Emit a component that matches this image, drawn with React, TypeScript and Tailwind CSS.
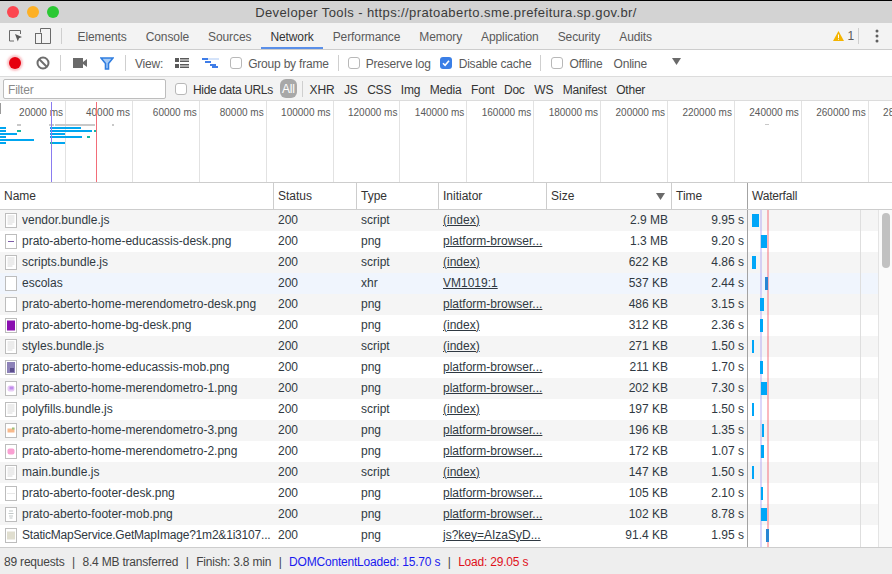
import type { ReactNode } from "react";

type Thumb = "doc" | "blank" | "dash" | "purple" | "edu" | "mero1" | "mero3" | "mero2" | "thin" | "footer" | "map";

type Row = {
  name: string;
  type: string;
  initiator: string;
  size: string;
  time: string;
  thumb: Thumb;
  bar: [number, number];
  wait?: number;
  dark?: boolean;
};

const rows: Row[] = [
  { name: "vendor.bundle.js", type: "script", initiator: "(index)", size: "2.9 MB", time: "9.95 s", thumb: "doc", bar: [752, 7] },
  { name: "prato-aberto-home-educassis-desk.png", type: "png", initiator: "platform-browser...", size: "1.3 MB", time: "9.20 s", thumb: "dash", bar: [761, 6], wait: 1 },
  { name: "scripts.bundle.js", type: "script", initiator: "(index)", size: "622 KB", time: "4.86 s", thumb: "doc", bar: [752, 4] },
  { name: "escolas", type: "xhr", initiator: "VM1019:1", size: "537 KB", time: "2.44 s", thumb: "blank", bar: [765, 3], dark: true },
  { name: "prato-aberto-home-merendometro-desk.png", type: "png", initiator: "platform-browser...", size: "486 KB", time: "3.15 s", thumb: "blank", bar: [760, 4] },
  { name: "prato-aberto-home-bg-desk.png", type: "png", initiator: "(index)", size: "312 KB", time: "2.36 s", thumb: "purple", bar: [760, 3] },
  { name: "styles.bundle.js", type: "script", initiator: "(index)", size: "271 KB", time: "1.50 s", thumb: "doc", bar: [752, 2] },
  { name: "prato-aberto-home-educassis-mob.png", type: "png", initiator: "platform-browser...", size: "211 KB", time: "1.70 s", thumb: "edu", bar: [760, 3] },
  { name: "prato-aberto-home-merendometro-1.png", type: "png", initiator: "platform-browser...", size: "202 KB", time: "7.30 s", thumb: "mero1", bar: [761, 6], wait: 1 },
  { name: "polyfills.bundle.js", type: "script", initiator: "(index)", size: "197 KB", time: "1.50 s", thumb: "doc", bar: [752, 2] },
  { name: "prato-aberto-home-merendometro-3.png", type: "png", initiator: "platform-browser...", size: "196 KB", time: "1.35 s", thumb: "mero3", bar: [762, 2], wait: 2 },
  { name: "prato-aberto-home-merendometro-2.png", type: "png", initiator: "platform-browser...", size: "172 KB", time: "1.07 s", thumb: "mero2", bar: [761, 3], wait: 1 },
  { name: "main.bundle.js", type: "script", initiator: "(index)", size: "147 KB", time: "1.50 s", thumb: "doc", bar: [752, 2] },
  { name: "prato-aberto-footer-desk.png", type: "png", initiator: "platform-browser...", size: "105 KB", time: "2.10 s", thumb: "thin", bar: [761, 2], wait: 1 },
  { name: "prato-aberto-footer-mob.png", type: "png", initiator: "platform-browser...", size: "102 KB", time: "8.78 s", thumb: "footer", bar: [761, 6], wait: 1 },
  { name: "StaticMapService.GetMapImage?1m2&1i3107...", type: "png", initiator: "js?key=AIzaSyD...", size: "91.4 KB", time: "1.95 s", thumb: "map", bar: [766, 3], dark: true },
];

const tabs = ["Elements", "Console", "Sources", "Network", "Performance", "Memory", "Application", "Security", "Audits"];
const filters = ["XHR", "JS", "CSS", "Img", "Media", "Font", "Doc", "WS", "Manifest", "Other"];
const ticks = [20000, 40000, 60000, 80000, 100000, 120000, 140000, 160000, 180000, 200000, 220000, 240000, 260000, 280000];

function FileIcon({ thumb }: { thumb: Thumb }) {
  return (
    <svg width="12" height="15" viewBox="0 0 12 15" className="mt-[2px] shrink-0">
      <rect x="0.5" y="0.5" width="11" height="14" fill="#fff" stroke="#bdbdbd" />
      {thumb === "doc" && (
        <path d="M2.5 3h7M2.5 5h7M2.5 7h7M2.5 9h7M2.5 11h5" stroke="#d8d8d8" fill="none" />
      )}
      {thumb === "dash" && <path d="M3 7.5h6" stroke="#7d5ca8" fill="none" />}
      {thumb === "thin" && <path d="M2.5 7.5h7" stroke="#d0d0d0" strokeDasharray="1 1" fill="none" />}
      {thumb === "purple" && <rect x="2" y="2.5" width="8" height="10" fill="#8a0fb0" />}
      {thumb === "edu" && (
        <>
          <rect x="2" y="2" width="8" height="11" fill="#8d82b8" />
          <rect x="5" y="8" width="4" height="4" fill="#5b4e8c" />
        </>
      )}
      {thumb === "mero1" && (
        <>
          <rect x="2.5" y="4.5" width="7" height="6" rx="2" fill="#e8ccf6" />
          <rect x="4.5" y="5.5" width="4" height="3" fill="#c08cec" />
        </>
      )}
      {thumb === "mero3" && (
        <>
          <rect x="2.5" y="5.5" width="7" height="4" fill="#f8b98c" />
          <rect x="7" y="4.5" width="2.5" height="2" fill="#9cc37c" />
        </>
      )}
      {thumb === "mero2" && <rect x="2.5" y="4.5" width="7" height="6" rx="2" fill="#f9a0d2" />}
      {thumb === "footer" && (
        <path d="M4 4h4M3.5 6.5h5M4 9h4M4.5 11h3" stroke="#c2c8c8" strokeWidth="1.2" fill="none" />
      )}
      {thumb === "map" && <rect x="2" y="3.5" width="8" height="8" fill="#e0decf" />}
    </svg>
  );
}

function Checkbox({ checked = false }: { checked?: boolean }) {
  return checked ? (
    <span className="flex h-3 w-3 shrink-0 items-center justify-center rounded-[3px] bg-[#3b7fe6]">
      <svg width="10" height="10" viewBox="0 0 10 10">
        <path d="M2 5.2l2.1 2.1L8 2.8" stroke="#fff" strokeWidth="1.6" fill="none" />
      </svg>
    </span>
  ) : (
    <span className="block h-3 w-3 shrink-0 rounded-[3px] border border-[#b8b8b8] bg-white" />
  );
}

function Sep({ className }: { className: string }) {
  return <span className={`h-4 w-px shrink-0 bg-[#cfcfcf] ${className}`} />;
}

function HeadCell({ className, children }: { className: string; children: ReactNode }) {
  return <div className={`flex shrink-0 items-center border-r border-[#cdcdcd] ${className}`}>{children}</div>;
}

function Overview() {
  return (
    <div className="relative flex h-[82px] shrink-0 overflow-hidden border-b border-[#cdcdcd] bg-white text-[10px] text-[#5a5a5a]">
      {ticks.map((t, i) => (
        <div
          key={t}
          className={`h-full shrink-0 whitespace-nowrap border-r border-[#e2e2e2] pt-[4px] text-right pr-[2px] ${i === 0 ? "w-[66px]" : "w-[66.9px]"}`}
        >
          {t} ms
        </div>
      ))}
      <svg className="absolute left-0 top-0" width="892" height="82" viewBox="0 100 892 82">
        <rect x="0" y="102" width="1" height="11" fill="#9a9a9a" />
        <g fill="#c8c8c8">
          <rect x="17" y="123" width="4" height="2" />
          <rect x="49" y="123" width="5" height="2" />
          <rect x="55" y="123" width="40" height="2" />
          <rect x="112" y="123" width="2" height="2" />
          <rect x="765" y="123" width="4" height="1" />
        </g>
        <g fill="#00a6f0">
          <rect x="0" y="126" width="6" height="2" />
          <rect x="50" y="126" width="31" height="2" />
          <rect x="0" y="129" width="6" height="2" />
          <rect x="50" y="129" width="42" height="2" />
          <rect x="0" y="132" width="17" height="2" />
          <rect x="50" y="132" width="15" height="2" />
          <rect x="0" y="135" width="6" height="2" />
          <rect x="50" y="135" width="32" height="2" />
          <rect x="0" y="138" width="34" height="2" />
          <rect x="0" y="141" width="6" height="2" />
          <rect x="50" y="141" width="15" height="2" />
        </g>
        <g fill="#14b8a0">
          <rect x="17" y="129" width="4" height="2" />
          <rect x="94" y="129" width="2" height="2" />
          <rect x="87" y="135" width="3" height="2" />
          <rect x="50" y="141" width="3" height="2" />
        </g>
        <rect x="51" y="101" width="1" height="81" fill="#8a7cf0" />
        <rect x="96" y="101" width="1" height="81" fill="#f26d78" />
      </svg>
    </div>
  );
}

function NetRow({ row, index }: { row: Row; index: number }) {
  const bg = row.name === "escolas" ? "bg-[#f0f5fd]" : index % 2 === 0 ? "bg-[#f5f5f5]" : "bg-white";
  return (
    <div className={`flex h-[21px] items-center pb-[2px] text-[12px] text-[#303942] ${bg}`}>
      <div className="flex w-[274px] shrink-0 items-center gap-[5px] overflow-hidden whitespace-nowrap pl-[5px]">
        <FileIcon thumb={row.thumb} />
        <span className={row.thumb === "map" ? "tracking-[-0.2px]" : ""}>{row.name}</span>
      </div>
      <div className="w-[83px] shrink-0 pl-[4px]">200</div>
      <div className="w-[82px] shrink-0 pl-[4px]">{row.type}</div>
      <div className="w-[108px] shrink-0 overflow-hidden whitespace-nowrap pl-[4px] underline">{row.initiator}</div>
      <div className="w-[125px] shrink-0 pr-[4px] text-right">{row.size}</div>
      <div className="w-[76px] shrink-0 pr-[4px] text-right">{row.time}</div>
      <div className="relative z-10 mt-[2px] flex h-[13px] grow items-stretch">
        <span className="h-full shrink-0" style={{ width: row.bar[0] - 748 - (row.wait ?? 0) }} />
        {row.wait ? <span className="h-full shrink-0 bg-[#c9d4ee]" style={{ width: row.wait }} /> : null}
        <span className={`h-full shrink-0 ${row.dark ? "bg-[#2a86d4]" : "bg-[#00a6f8]"}`} style={{ width: row.bar[1] }} />
      </div>
    </div>
  );
}

export default function App() {
  return (
    <div className="flex h-[574px] w-[892px] flex-col overflow-hidden bg-white font-['Liberation_Sans',Arial,sans-serif] text-[12px] text-[#333]">
      {/* Window title */}
      <div className="relative flex h-[23px] shrink-0 items-center justify-center border-t border-black bg-[#d3d3d3] pt-[2px] text-[13px] tracking-[0.4px] text-[#3a3a3a]">
        <div className="absolute left-[7px] top-[5px] flex gap-2">
          <span className="h-3 w-3 rounded-full bg-[#fc4650]" />
          <span className="h-3 w-3 rounded-full bg-[#fdb024]" />
          <span className="h-3 w-3 rounded-full bg-[#2ac833]" />
        </div>
        Developer Tools - https://pratoaberto.sme.prefeitura.sp.gov.br/
      </div>

      {/* Panel tabs */}
      <div className="flex h-[27px] shrink-0 items-center border-b border-[#cdcdcd] bg-[#f3f3f3] tracking-[-0.1px]">
        <svg width="16" height="14" viewBox="0 0 16 14" className="ml-[8px] shrink-0">
          <path d="M6 12H1.5V1.5h11V5" stroke="#6a6a6a" strokeWidth="1" fill="none" />
          <path d="M7 5l7 3-3 1.2L9.8 12.5z" fill="#5a5a5a" />
        </svg>
        <svg width="16" height="16" viewBox="0 0 16 16" className="ml-[11px] shrink-0">
          <path d="M5.5 4.5V.5h10v15h-10" stroke="#6a6a6a" fill="none" />
          <rect x="0.5" y="5.5" width="6" height="10" stroke="#6a6a6a" fill="none" />
        </svg>
        <Sep className="ml-[10px] mr-[6px]" />
        {tabs.map((t) => (
          <div
            key={t}
            className={`flex h-full shrink-0 items-center px-[9.5px] ${t === "Network" ? "border-b-2 border-[#5a8fe8] pt-[4px] text-[#333]" : "pt-[2px] text-[#5a5a5a]"}`}
          >
            {t}
          </div>
        ))}
        <div className="ml-auto flex items-center pr-[13px]">
          <svg width="11" height="10" viewBox="0 0 11 10" className="shrink-0">
            <path d="M5.5 0L11 10H0z" fill="#f4b400" />
            <path d="M5 3.5h1v3.5h-1zM5 7.8h1v1h-1z" fill="#fff" />
          </svg>
          <span className="ml-[3px] text-[#5a5a5a]">1</span>
          <Sep className="ml-[4px]" />
          <svg width="4" height="14" viewBox="0 0 4 14" className="ml-[16px] shrink-0">
            <circle cx="2" cy="2" r="1.5" fill="#5f5f5f" />
            <circle cx="2" cy="7" r="1.5" fill="#5f5f5f" />
            <circle cx="2" cy="12" r="1.5" fill="#5f5f5f" />
          </svg>
        </div>
      </div>

      {/* Network toolbar */}
      <div className="flex h-[27px] shrink-0 items-center border-b border-[#dcdcdc] bg-white tracking-[-0.2px] text-[#5a5a5a]">
        <span className="ml-[9px] h-3 w-3 shrink-0 rounded-full bg-[#e6000f] shadow-[0_0_2px_2px_rgba(240,90,100,0.35)]" />
        <svg width="14" height="14" viewBox="0 0 14 14" className="ml-[15px] shrink-0">
          <circle cx="7" cy="7" r="5.5" stroke="#6e6e6e" strokeWidth="2" fill="none" />
          <path d="M3 3l8 8" stroke="#6e6e6e" strokeWidth="2" />
        </svg>
        <Sep className="ml-[10px]" />
        <svg width="14" height="10" viewBox="0 0 14 10" className="ml-[12px] shrink-0">
          <rect x="0" y="0" width="10" height="10" fill="#6a6a6a" />
          <path d="M10 4l4-3v8l-4-3z" fill="#6a6a6a" />
        </svg>
        <svg width="14" height="13" viewBox="0 0 14 13" className="ml-[13px] shrink-0">
          <path d="M1 1h12L8.5 6.5V12h-3V6.5z" fill="#a8ccf6" stroke="#2f7de0" strokeWidth="1.6" />
        </svg>
        <Sep className="ml-[11px]" />
        <span className="ml-[9px] pt-[2px]">View:</span>
        <svg width="14" height="10" viewBox="0 0 14 10" className="ml-[12px] shrink-0">
          <path d="M0 0h4v4H0zM5 0h9v1.4H5zM5 2.6h9V4H5zM0 6h4v4H0zM5 6h9v1.4H5zM5 8.6h9V10H5z" fill="#5a5a5a" />
        </svg>
        <svg width="17" height="10" viewBox="0 0 17 10" className="ml-[13px] shrink-0">
          <rect x="6" y="0" width="11" height="2" fill="#d4e3fa" />
          <rect x="0" y="0" width="6" height="2" fill="#3f7de8" />
          <rect x="3" y="3" width="6" height="2" fill="#3f7de8" />
          <rect x="8" y="6" width="6" height="2" fill="#3f7de8" />
          <rect x="10" y="8" width="6" height="2" fill="#3f7de8" />
        </svg>
        <span className="ml-[11px]"><Checkbox /></span>
        <span className="ml-[6px] pt-[2px]">Group by frame</span>
        <Sep className="ml-[9px]" />
        <span className="ml-[9px]"><Checkbox /></span>
        <span className="ml-[6px] pt-[2px]">Preserve log</span>
        <span className="ml-[9px]"><Checkbox checked /></span>
        <span className="ml-[7px] pt-[2px]">Disable cache</span>
        <Sep className="ml-[9px]" />
        <span className="ml-[10px]"><Checkbox /></span>
        <span className="ml-[6px] pt-[2px]">Offline</span>
        <span className="ml-[11px] pt-[2px]">Online</span>
        <svg width="9" height="7" viewBox="0 0 9 7" className="mb-[3px] ml-[25px] shrink-0">
          <path d="M0 0h9L4.5 7z" fill="#6a6a6a" />
        </svg>
      </div>

      {/* Filter bar */}
      <div className="flex h-[24px] shrink-0 items-center border-b border-[#dcdcdc] bg-[#f3f3f3] tracking-[-0.2px] text-[#333]">
        <div className="ml-[3px] flex h-[20px] w-[163px] shrink-0 items-center rounded-[2px] border border-[#bdbdbd] bg-white pl-[4px] pt-[2px] text-[#8a8a8a]">
          Filter
        </div>
        <span className="ml-[9px]"><Checkbox /></span>
        <span className="ml-[6px] pt-[2px] tracking-[-0.35px]">Hide data URLs</span>
        <span className="ml-[7px] flex h-[19px] w-[17px] shrink-0 items-center justify-center rounded-[6px] bg-[#a8a8a8] text-white">All</span>
        <Sep className="ml-[5px] mr-[2px]" />
        {filters.map((f) => (
          <span key={f} className="shrink-0 px-[4.8px] pt-[2px]">{f}</span>
        ))}
      </div>

      <Overview />

      {/* Request table */}
      <div className="flex h-[27px] shrink-0 border-b border-[#cdcdcd] bg-white text-[12px] text-[#333]">
        <HeadCell className="w-[274px] pl-[4px]">Name</HeadCell>
        <HeadCell className="w-[83px] pl-[4px]">Status</HeadCell>
        <HeadCell className="w-[82px] pl-[4px]">Type</HeadCell>
        <HeadCell className="w-[108px] pl-[4px]">Initiator</HeadCell>
        <HeadCell className="w-[125px] justify-between pl-[4px] pr-[6px]">
          Size
          <svg width="9" height="7" viewBox="0 0 9 7">
            <path d="M0 0h9L4.5 7z" fill="#6a6a6a" />
          </svg>
        </HeadCell>
        <div className="flex w-[76px] shrink-0 items-center border-r border-[#a3a3a3] pl-[4px]">Time</div>
        <div className="flex grow items-center pl-[4px] tracking-[-0.2px]">Waterfall</div>
      </div>

      <div className="relative flex-1 overflow-hidden">
        {rows.map((row, i) => (
          <NetRow key={row.name} row={row} index={i} />
        ))}
        {/* Waterfall guide lines and the scrollbar sit over the rows */}
        <div className="absolute inset-y-0 left-[747px] w-px bg-[#a3a3a3]" />
        <div className="absolute inset-y-0 left-[760px] w-[2px] bg-[#8a7cf0]/30" />
        <div className="absolute inset-y-0 left-[767px] w-[2px] bg-[#f5505c]/40" />
        <div className="absolute inset-y-0 left-[860px] w-px bg-[#dedede]" />
        <div className="absolute inset-y-0 right-0 z-20 w-[14px] border-l border-[#e4e4e4] bg-[#fafafa]">
          <div className="ml-[3px] mt-[3px] h-[55px] w-[8px] rounded-full bg-[#c1c1c1]" />
        </div>
      </div>

      {/* Summary */}
      <div className="flex h-[27px] shrink-0 items-center whitespace-nowrap border-t border-[#cdcdcd] bg-[#eeeeee] pl-[4px] pt-[2px] tracking-[-0.2px] text-[#444]">
        <span>89 requests</span>
        <span className="mx-[7.5px]">|</span>
        <span>8.4 MB transferred</span>
        <span className="mx-[7.5px]">|</span>
        <span>Finish: 3.8 min</span>
        <span className="mx-[7.5px]">|</span>
        <span className="text-[#1a1af0]">DOMContentLoaded: 15.70 s</span>
        <span className="mx-[7.5px]">|</span>
        <span className="text-[#e0101a]">Load: 29.05 s</span>
      </div>
    </div>
  );
}
